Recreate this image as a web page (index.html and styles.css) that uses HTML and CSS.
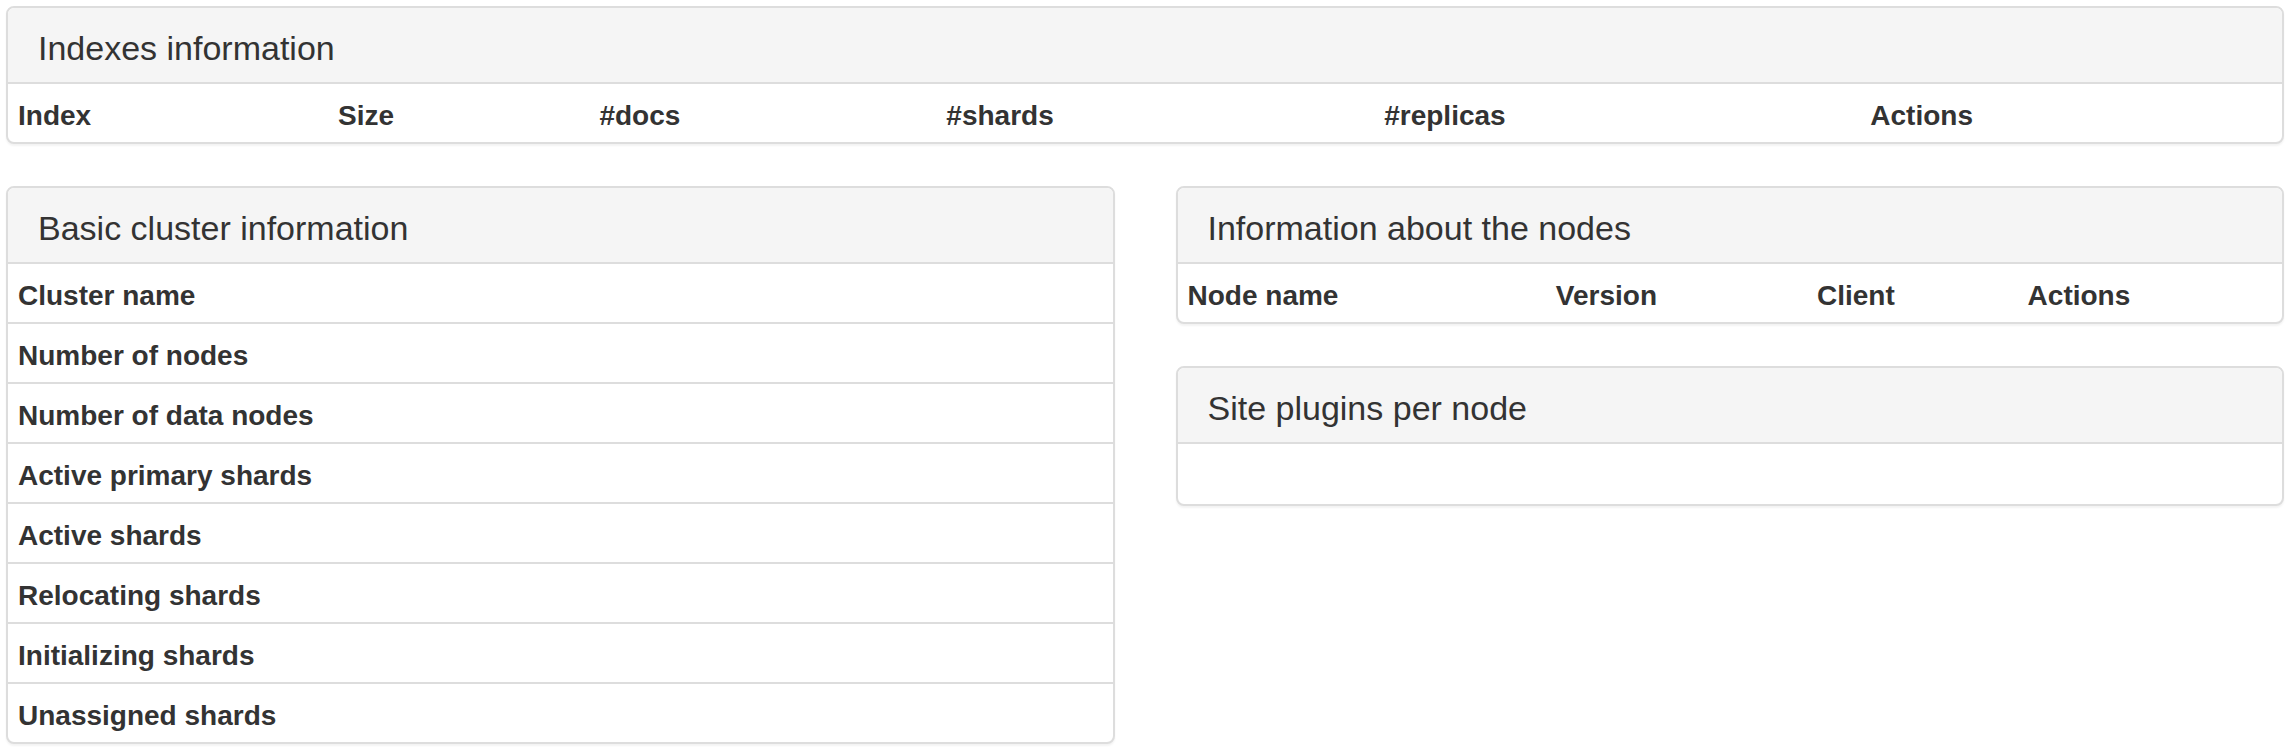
FILE: index.html
```html
<!DOCTYPE html>
<html>
<head>
<meta charset="utf-8">
<title>Cluster</title>
<link rel="stylesheet" href="styles.css">
</head>
<body>
<div class="page">
  <div class="panel">
    <div class="panel-heading"><h3 class="panel-title">Indexes information</h3></div>
    <table class="table">
      <thead>
        <tr><th>Index</th><th>Size</th><th>#docs</th><th>#shards</th><th>#replicas</th><th>Actions</th></tr>
      </thead>
    </table>
  </div>
  <div class="row">
    <div class="col">
      <div class="panel">
        <div class="panel-heading"><h3 class="panel-title">Basic cluster information</h3></div>
        <table class="table">
          <tbody>
            <tr><th>Cluster name</th><td></td></tr>
            <tr><th>Number of nodes</th><td></td></tr>
            <tr><th>Number of data nodes</th><td></td></tr>
            <tr><th>Active primary shards</th><td></td></tr>
            <tr><th>Active shards</th><td></td></tr>
            <tr><th>Relocating shards</th><td></td></tr>
            <tr><th>Initializing shards</th><td></td></tr>
            <tr><th>Unassigned shards</th><td></td></tr>
          </tbody>
        </table>
      </div>
    </div>
    <div class="col">
      <div class="panel">
        <div class="panel-heading"><h3 class="panel-title">Information about the nodes</h3></div>
        <table class="table">
          <thead>
            <tr><th>Node name</th><th>Version</th><th>Client</th><th>Actions</th></tr>
          </thead>
        </table>
      </div>
      <div class="panel">
        <div class="panel-heading"><h3 class="panel-title">Site plugins per node</h3></div>
        <div class="panel-body"></div>
      </div>
    </div>
  </div>
</div>
</body>
</html>
```
FILE: styles.css
```css
html, body {
  margin: 0;
  padding: 0;
  background: #fff;
}
body {
  font-family: "Liberation Sans", Arial, Helvetica, sans-serif;
  color: #333;
}
.page {
  padding: 6px 10px 0 6px;
}
.panel {
  background: #fff;
  border: 2px solid #ddd;
  border-radius: 8px;
  box-shadow: 0 2px 2px rgba(0, 0, 0, 0.05);
  margin-bottom: 42px;
  overflow: hidden;
}
.panel-heading {
  background: #f5f5f5;
  border-bottom: 2px solid #ddd;
  padding: 22px 30px 16px;
}
.panel-title {
  margin: 0;
  font-size: 34px;
  line-height: 36px;
  font-weight: 400;
  color: #333;
}
.table {
  width: 100%;
  border-collapse: collapse;
  border-spacing: 0;
}
.table th,
.table td {
  padding: 13px 10px 7px;
  font-size: 28px;
  line-height: 38px;
  text-align: left;
  border-top: 2px solid #ddd;
  color: #333;
}
.table th {
  font-weight: 700;
}
.table tr:first-child th,
.table tr:first-child td {
  border-top: 0;
}
.panel-body {
  padding: 30px;
}
.row {
  display: grid;
  grid-template-columns: 1fr 1fr;
  column-gap: 61px;
  align-items: start;
}
```
